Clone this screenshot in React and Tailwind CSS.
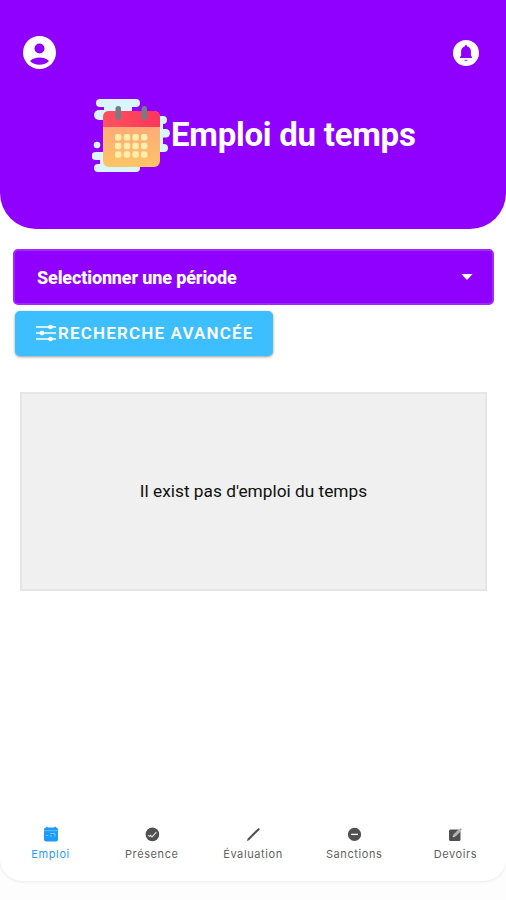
import React from "react";

function ProfileIcon() {
  return (
    <svg className="-mt-[2px] size-[33px]" viewBox="0 0 33 33">
      <circle cx="16.5" cy="16.5" r="16.5" fill="#fff" />
      <circle cx="16.5" cy="12.5" r="5" fill="#9000ff" />
      <path d="M7 25C10 22.200 13 21.500 16.5 21.500S23 22.200 26 25C23.5 27.6 20.5 28.8 16.5 28.8S9.500 27.6 7 25Z" fill="#9000ff" />
    </svg>
  );
}

function BellIcon() {
  return (
    <svg className="size-[26px]" viewBox="0 0 26 26">
      <circle cx="13" cy="13" r="13" fill="#fff" />
      <path d="M7 18V17L8.100 15.800V11.500C8.100 8.600 9.700 6.800 12 6.200V5.900A1 1 0 0 1 14 5.900V6.200C16.300 6.800 17.900 8.600 17.900 11.500V15.800L19 17V18Z" fill="#9000ff" />
      <path d="M11.300 19.800H14.700A1.700 1.500 0 0 1 11.300 19.800Z" fill="#9000ff" opacity=".7" />
    </svg>
  );
}

function CalendarArt() {
  return (
    <svg className="h-[78px] w-[80px] shrink-0" viewBox="0 0 80 78">
      <defs>
        <linearGradient id="sheet" x1="0" y1="0" x2="0" y2="1">
          <stop offset="0" stopColor="#ffa180" />
          <stop offset="1" stopColor="#ffc565" />
        </linearGradient>
        <linearGradient id="band" x1="0" y1="0" x2="1" y2="0">
          <stop offset="0" stopColor="#ff535f" />
          <stop offset="1" stopColor="#ff355a" />
        </linearGradient>
      </defs>
      <g fill="#d9f5ff">
        <rect x="4" y="2" width="44" height="8" rx="4" />
        <rect x="12" y="7" width="28" height="10" />
        <rect x="2" y="13" width="36" height="10" rx="5" />
        <circle cx="5" cy="48" r="3.300" />
        <rect x="-.5" y="55" width="30" height="8" rx="4" />
        <rect x="8" y="60" width="20" height="10" />
        <rect x="2" y="67" width="46" height="8" rx="4" />
        <rect x="50" y="19" width="25" height="8" rx="4" />
        <rect x="50" y="23" width="21" height="29" />
        <rect x="50" y="32" width="28" height="8.500" rx="4.200" />
        <rect x="50" y="47" width="26" height="8" rx="4" />
      </g>
      <rect x="11" y="14" width="57" height="56" rx="6" fill="url(#sheet)" />
      <path d="M11 30V20Q11 14 17 14H62Q68 14 68 20V30Z" fill="url(#band)" />
      <g fill="#747d86">
        <rect x="23.500" y="9" width="5.500" height="14" rx="2.700" />
        <rect x="49.500" y="9" width="5.500" height="14" rx="2.700" />
      </g>
      <g fill="#ffefad">
        {[40.3, 49, 57.500].map((y) =>
          [26.200, 35, 43.600, 52.200].map((x) => (
            <rect key={`${x}-${y}`} x={x - 3.200} y={y - 3.200} width="6.400" height="6.400" rx="2.300" />
          ))
        )}
      </g>
    </svg>
  );
}

function FilterIcon() {
  return (
    <svg className="-mt-[2px] h-[18px] w-[20px] shrink-0" viewBox="0 0 20 18" fill="#fff" stroke="#fff" strokeWidth="1.300">
      <path d="M0 3H20M0 9H20M0 15H20" />
      <rect x="13" y="1.500" width="3" height="3" rx="1" />
      <rect x="4.500" y="7.500" width="3" height="3" rx="1" />
      <rect x="13" y="13.500" width="3" height="3" rx="1" />
    </svg>
  );
}

const icons = {
  calendar: (
    <>
      <rect x="1" y="1.500" width="14" height="14" rx="2" fill="#1b9bfa" />
      <path d="M1 4.700H15" stroke="#76c8ff" strokeWidth=".8" />
      <path d="M7 7.500H12M3 9.500H5M7 10H9M12 7.500V10.500" stroke="#76c8ff" strokeWidth="1" />
      <path d="M4 .8V2.500M12 .8V2.500" stroke="#1b9bfa" strokeWidth="1.500" />
    </>
  ),
  check: (
    <>
      <circle cx="8.400" cy="8.400" r="6.800" fill="#505050" />
      <path d="M4.200 9.100L6.100 10.900M6 8.800L8 10.800L12.400 6.200" fill="none" stroke="#ddd" strokeWidth="1.200" />
    </>
  ),
  pencil: <path d="M1.800 15L2.800 12.500L12.300 3L13.800 2L14.800 3L13.800 4.500L4.300 14Z" fill="#505050" />,
  minus: (
    <>
      <circle cx="8.500" cy="8.400" r="6.600" fill="#505050" />
      <path d="M5 8.400H12" stroke="#fff" strokeWidth="1.300" />
    </>
  ),
  edit: (
    <>
      <rect x="2" y="3.500" width="11.500" height="11.500" rx="1.500" fill="#505050" />
      <path d="M6 11L7 8.500L13.500 2L15 3.500L8.500 10Z" fill="#aaa" stroke="#eee" strokeWidth=".6" />
    </>
  ),
};

const tabs = [
  { label: "Emploi", icon: "calendar", active: true },
  { label: "Présence", icon: "check" },
  { label: "Évaluation", icon: "pencil" },
  { label: "Sanctions", icon: "minus" },
  { label: "Devoirs", icon: "edit" },
];

export default function App() {
  return (
    <div className="h-[900px] w-[506px] overflow-hidden bg-[#fdfdfd] font-['Roboto',sans-serif]">
      <div className="flex h-[881px] flex-col rounded-b-[22px] bg-white shadow-[0_1px_3px_rgba(0,0,0,0.08)]">
        <header className="h-[229px] shrink-0 rounded-b-[36px] bg-[#9000ff] pt-9">
          <div className="flex h-[34px] items-center justify-between pr-[27px] pl-[23px]">
            <ProfileIcon />
            <BellIcon />
          </div>
          <div className="mt-[27px] flex items-center pl-[92px]">
            <CalendarArt />
            <h1 className="-mt-[2px] -ml-[1px] text-[33px] leading-10 font-bold tracking-[-0.25px] whitespace-nowrap text-white">Emploi du temps</h1>
          </div>
        </header>

        <main className="flex-1">
          <button className="mt-[20px] ml-[13px] flex h-[56px] w-[481px] items-center justify-between rounded-[5px] border-2 border-[#9d2cfa] bg-[#9000ff] pr-[19px] pl-[22px] text-[18px] font-extrabold tracking-[-0.15px] text-white">
            <span className="whitespace-nowrap">Selectionner une période</span>
            <svg className="h-[6px] w-[12px]" viewBox="0 0 13 7"><path d="M0 0H13L6.500 7Z" fill="#fff" /></svg>
          </button>
          <button className="mt-[6px] ml-[15px] flex h-[45px] w-[258px] items-center rounded-[5px] bg-[#3dbfff] pl-[21px] text-[17px] font-semibold tracking-[1.17px] text-white shadow-[0_1px_3px_rgba(0,0,0,0.4)]">
            <FilterIcon />
            <span className="ml-[2px] whitespace-nowrap">RECHERCHE AVANCÉE</span>
          </button>
          <section className="mt-[36px] ml-[20px] flex h-[199px] w-[467px] items-center justify-center border-2 border-[#e6e6e6] bg-[#f0f0f0] text-[17.3px] text-[#111]">
            <p className="whitespace-nowrap">Il exist pas d'emploi du temps</p>
          </section>
        </main>

        <nav className="grid h-[55px] shrink-0 grid-cols-5">
          {tabs.map((tab) => (
            <div key={tab.label} className={`flex flex-col items-center ${tab.active ? "text-[#2c9cff]" : "text-[#626262]"}`}>
              <svg className="size-4" viewBox="0 0 16 16">{icons[tab.icon]}</svg>
              <span className="mt-1 font-['Inter',sans-serif] text-[11px] leading-4 tracking-[0.6px] whitespace-nowrap">{tab.label}</span>
            </div>
          ))}
        </nav>
      </div>
    </div>
  );
}
